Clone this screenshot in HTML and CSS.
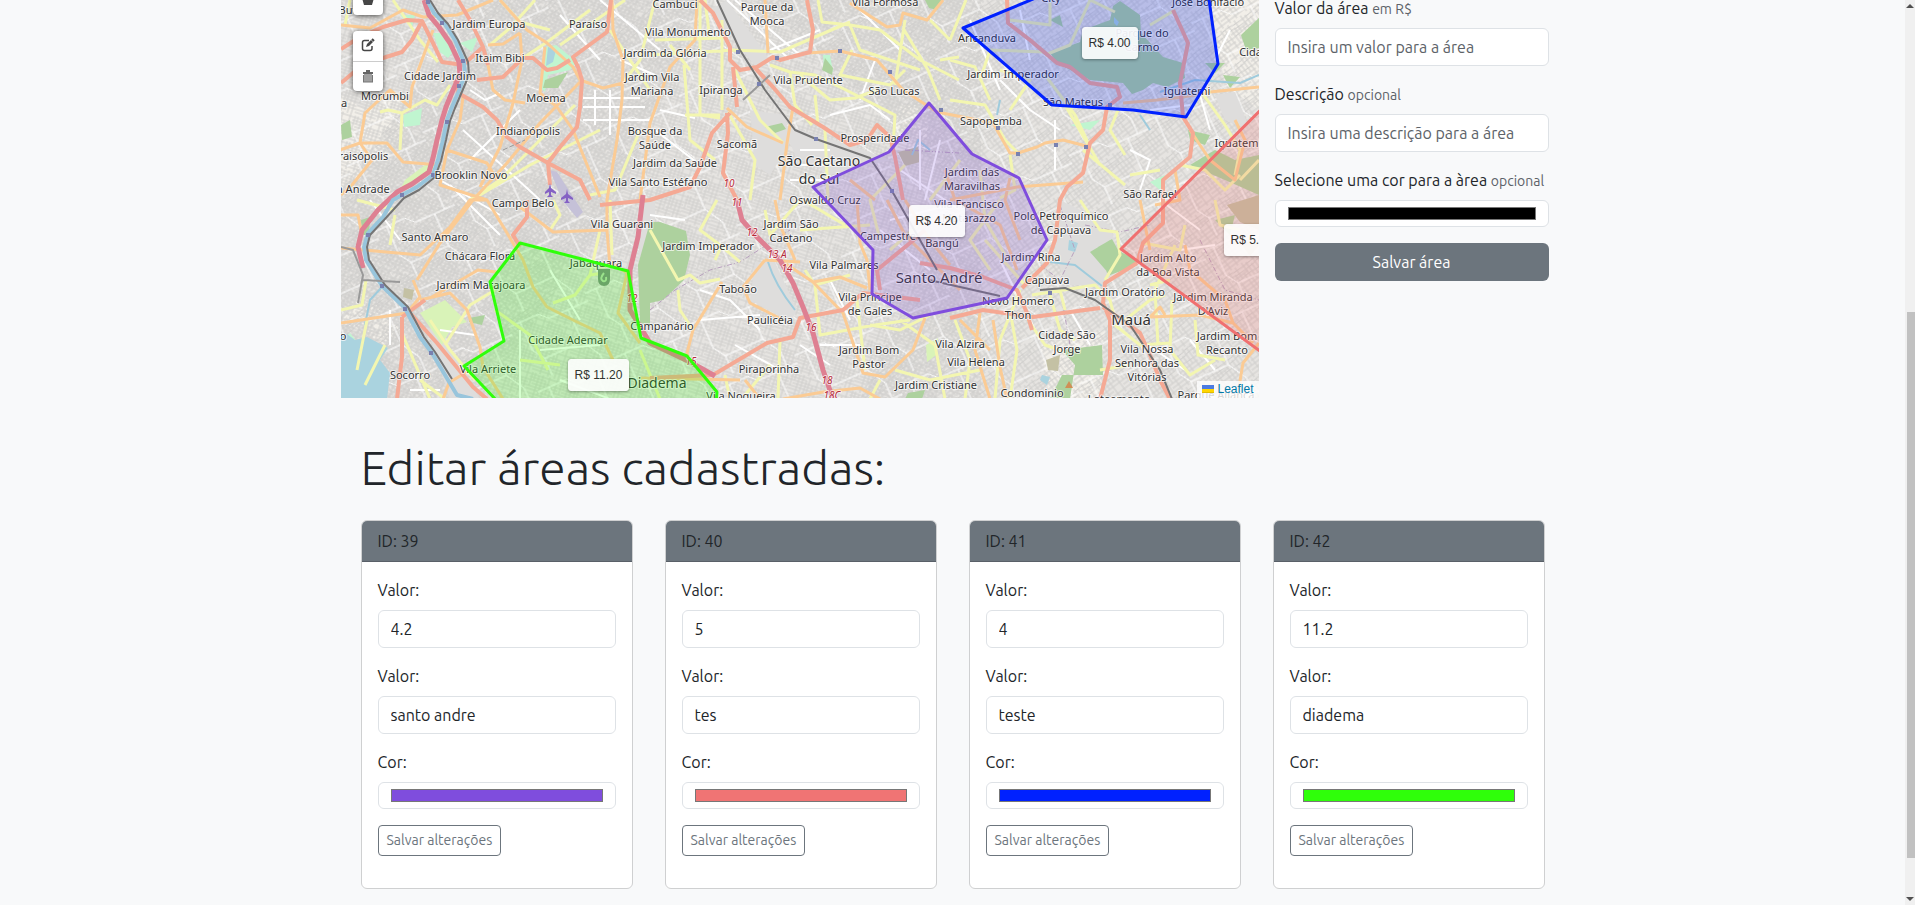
FILE: index.html
```html
<!DOCTYPE html>
<html lang="pt-BR">
<head>
<meta charset="utf-8">
<meta name="viewport" content="width=device-width, initial-scale=1">
<title>Áreas cadastradas</title>
<link rel="stylesheet" href="styles.css">
</head>
<body>
<main class="page">
  <div class="wrapper">
    <section class="editor">
      <div class="map">
        <svg class="map-canvas" viewBox="341 0 918 398" preserveAspectRatio="xMidYMin slice" role="img" aria-label="Mapa">
          <defs>
            <pattern id="streets" width="31" height="27" patternUnits="userSpaceOnUse" patternTransform="rotate(18)">
              <path class="lane" d="M0 2H31M0 5H17M0 8H31M4 11H31M0 14H31M0 17H12M15 18H31M0 21H31M0 24H22M2 0V14M5 0V8M9 2V27M13 0V21M17 5V27M20 0V18M24 8V27M28 0V27"/>
            </pattern>
            <pattern id="streets-b" width="37" height="33" patternUnits="userSpaceOnUse" patternTransform="rotate(-37)">
              <path class="lane" d="M0 2Q18 6 37 2M0 6Q18 10 37 6M0 10H20M0 14Q18 11 37 14M5 18H37M0 22H37M0 26H25M0 30H37M3 0V22M7 6V33M11 0V14M15 10V33M19 0V30M23 2V22M27 6V33M31 0V18M35 2V33"/>
            </pattern>
            <pattern id="avenues" width="83" height="71" patternUnits="userSpaceOnUse" patternTransform="rotate(-24)">
              <path class="avenue" d="M0 9H32L40 17H83M12 9V40L20 52V71M20 52H61V17M61 52L72 71M72 0V17"/>
            </pattern>
          </defs>

          <rect class="ground" x="341" width="918" height="399"/>
          <g class="built">
            <path d="M341 95L365 110 400 95 400 140 360 175 341 190ZM1210 0H1259V110L1225 85ZM900 105L930 105 925 150 890 150ZM363 290L400 330 385 345 341 322ZM1040 345L1105 330 1100 399H1050Z"/>
          </g>
          <rect x="341" width="640" height="399" fill="url(#streets)"/>
          <path d="M480 0H700L620 200 480 399H341V190ZM760 0H1259V399H860L960 190Z" fill="url(#streets-b)"/>
          <rect x="341" width="918" height="399" fill="url(#avenues)"/>
          <g class="industry">
            <path d="M755 262L775 262 797 310 790 322 750 300ZM750 110L785 115 790 143 770 175 755 165ZM1060 200L1110 225 1120 262 1100 285 1065 285 1055 250ZM783 125L850 145 890 160 830 175 795 155ZM710 10L727 0 770 60 755 66ZM642 200H655V225L638 262ZM427 328L440 330 480 399H450ZM1215 95L1235 92 1250 130 1225 120Z"/>
          </g>

          <g class="park">
            <path d="M545 47L556 45 577 62 570 70 548 75 545 92 541 88ZM403 115L422 108 420 125 404 127ZM460 43L478 37 472 52ZM650 266L665 262 676 270 665 279 655 276ZM823 55L830 55 833 72 824 68ZM1150 182L1165 175 1160 190ZM400 15L415 15 412 27ZM1070 125L1100 120 1090 130ZM341 340L350 333 358 343 345 350ZM433 33L440 33 453 52 448 58 440 52Z"/>
          </g>
          <g class="meadow">
            <path d="M420 313L445 300 467 322 452 327 442 345ZM405 180L425 165 440 167 400 190ZM926 345L938 338 936 355 927 362Z"/>
          </g>
          <g class="wood">
            <path d="M638 265L650 222 660 222 686 231 690 255 684 280 663 300 650 303 650 325 640 323ZM545 80L568 72 558 88 543 88ZM1113 6L1120 1 1140 15 1141 33 1163 57 1183 63 1185 78 1167 87 1153 83 1143 90 1132 94 1123 83 1090 80 1057 63 1050 53 1080 42 1083 30 1110 20ZM1090 252L1110 240 1117 250 1143 263 1110 275ZM1098 247L1112 239 1118 250 1137 262 1107 273ZM1062 350L1102 345 1103 375 1062 375 1050 399H1070L1075 365ZM925 0H943L937 10 929 8ZM765 127L782 123 786 129 775 133ZM825 58L833 68 832 75 822 70ZM1241 35L1259 18V48L1246 50ZM1205 63L1225 63 1215 73ZM1223 75L1240 77 1230 88ZM1188 130L1210 135 1205 145 1190 140ZM341 125L350 120 352 137 342 140ZM361 220L370 217 369 235 362 235ZM469 318L485 315 482 325 469 322ZM908 393L925 390 922 399H905ZM1190 165L1215 150 1235 160 1259 155V195L1225 180ZM1050 20L1060 15 1063 27ZM1215 220L1235 215 1230 235Z"/>
          </g>
          <g class="scrub">
            <path d="M898 152L918 147 920 162 905 166ZM404 288L414 290 412 300 403 297ZM1046 360L1060 355 1058 371 1048 370ZM1227 205L1259 195V230L1240 222ZM1238 240L1259 245 1250 256Z"/>
          </g>
          <g class="airport">
            <path d="M550 170L557 172 583 212 577 218 562 200Z"/>
          </g>
          <g class="water">
            <path d="M341 337L347 334 355 340 367 337 388 348 380 360 390 373 387 399H341ZM548 47L556 50 553 62 546 66ZM1114 17L1119 22 1117 26 1114 23ZM1069 240L1078 243 1075 252 1068 250ZM1042 375L1050 377 1047 385 1040 380Z"/>
          </g>
          <g class="stream">
            <path d="M365 325L370 300 382 287M768 262Q775 285 795 310M1050 262L1075 265 1102 286M1140 115L1150 130M997 115L1000 100M912 155L918 140 930 150M1160 92L1195 80 1240 83 1259 75"/>
          </g>
          <path class="border" d="M650 310L675 290 710 270 740 262 790 230M1060 205L1075 250 1060 280 1040 265M905 150L959 153M1085 225L1120 232 1150 225M1200 240L1225 290 1259 300M1062 300L1070 345"/>

          <g class="residential">
            <path d="M470 90L485 100 500 93M463 130L540 200M470 160L520 110M450 185L500 235M583 98H640M583 107H645M583 120H650M595 90V125M610 90V135M600 0L660 50M620 60L655 75M560 15L600 60M655 130L700 165M660 110L695 118M685 220L650 215M727 0L790 60M735 0L800 55M770 50L820 30M860 10L900 50M875 60L860 100M830 115L870 105 890 120M800 165H840M800 150H830M790 180H830M1000 80L1030 110 1060 130M1055 120V170M1150 110L1190 105M1200 95L1210 130M1130 150L1150 160 1140 190M700 290L730 300 760 330M735 345L780 370M700 320L760 315M800 345L830 365M820 345H860M830 280L850 320M1000 260L1040 340M1140 340L1185 370M1160 200L1200 230M370 200L400 240M440 180L500 215M390 310V345M440 330L475 335M520 330V399M540 350L600 345M550 270L580 320M1070 310L1090 345M900 170L960 210M880 230L930 270M920 130V190M940 140L925 200M890 220L950 205M1230 30L1215 60M1180 250L1215 245M1190 340L1215 370M410 390H440M560 380L610 399M970 20L1000 90M1020 10L1030 60"/>
          </g>

          <g class="secondary">
            <path d="M393 0L420 40 438 62M380 112L388 110 402 113 400 150M402 113L425 100 437 105 450 85M500 0L520 22 550 30M560 45L625 0M523 58L550 40 590 10M535 0L510 28 490 45M350 0L345 25M470 200L500 180 560 120 575 105M480 195L530 165 600 130M590 195L615 190 640 130M623 83L640 60 655 0M610 30L650 90M700 0V115L720 118M655 40L725 38M650 55L735 50M685 115H720M722 20V110M684 65L690 140 715 160M705 0L710 40M730 50L780 52 850 22M800 75L830 100 855 98 877 90M770 65L790 72 815 75 850 92 895 115 893 150M818 0L822 22 850 25 880 30 920 60 959 80M850 25L860 50 920 70M852 50L840 75 890 85 905 70M815 95L818 125M905 20L895 85M903 28L928 70 940 100M940 60L959 57M930 20L950 40M728 112L755 160 750 200M783 143L760 120 735 70M790 72L795 105 812 125M825 130L828 200M670 45L690 70M950 60L975 67 990 100M950 100L985 105 1005 140 1018 153M966 0L950 40M1000 70L1030 80 1010 110M1045 75L1075 115 1090 147M1065 105L1100 165M1118 110L1110 130 1125 155M1083 150L1125 185M1200 90L1225 125 1240 150 1235 175M1130 175L1160 170M1010 155L1015 190 1000 198M980 80L990 50 1045 52M1090 0L1070 45 1045 55M1050 0V25L1010 20M357 200L395 210M357 370L367 320M341 310L362 305 366 280M390 245L395 215M402 333L430 399M430 320L450 350 475 380M445 345L470 305 495 290M495 310L530 335 548 370M553 303L575 295 590 275 600 230M590 275L610 272M553 200L560 215 550 230M610 200L612 255M650 230L678 280 690 275 700 283 720 279M717 200L700 230 720 245 740 262M678 290L680 310 693 330M715 260L722 245M765 210L770 235 800 200M800 230L870 225M803 200L845 225M815 285L820 335 875 325 910 320M805 270L815 285 850 275M857 300L865 370M780 340L778 399M725 375L730 399M745 395L770 365M900 320L935 345 945 399M870 325L900 330 930 315M955 320L970 360 965 399M895 370L930 380 980 370M880 380L870 399M1010 310L1017 350 1010 399M1050 295L1060 330 1075 340M1032 295L1095 285 1110 300 1115 320M1060 290L1065 310M1020 290L1000 340 995 399M1080 200L1100 230 1117 232 1120 255 1105 280M1115 325L1140 345 1170 343M1125 320L1150 300 1165 295M1175 245L1155 290 1158 345M1172 300L1170 350 1190 375 1215 360M1195 320L1198 355 1225 360M1143 243L1180 250 1185 225M1215 200L1220 225 1240 230M1180 165L1205 170 1225 190 1240 175M1100 370L1130 365M1028 320L1045 345 1065 352M1170 280L1150 285M890 250L930 215M905 165L870 200 880 240M960 160L930 200M980 170L985 220 1005 255M1000 200L970 240 990 270M1090 0L1115 12M1150 25L1175 10M1259 160L1240 180M985 240L1025 285M365 385L385 345M420 380L445 399M520 360L560 365M640 350L660 399"/>
          </g>

          <g class="primary">
            <path d="M341 25L370 28 403 10 423 17 457 15 493 0M340 150L360 143 365 113 390 90 410 107 412 87 433 30M360 143L387 143 403 162 440 165M360 143L372 160 352 185 341 195M500 0L527 30 547 43 573 67 580 80 603 88 623 83M612 0L613 30 623 60 622 100 617 140 607 200 607 230M545 47L540 93 557 107 573 130 600 197M520 33L522 60 513 103 500 147 480 187M488 45L503 44 520 33M580 82L540 123 507 163 473 200 440 243 417 280M463 97L460 120 447 150 487 163 497 180M488 65L493 90 505 100 525 103M341 248L420 255 450 227 470 200 487 200M413 280L420 297 407 313 341 323M420 300L450 293 467 310 480 347 483 367 503 399M430 298L478 270 497 272M447 150L440 185 487 200 507 233 523 260 533 287 547 307 573 320 600 333 613 360M600 267L615 265 627 273 618 313 640 343M520 207L553 232 607 230 610 267M697 0L695 40 670 67 650 123 640 200M765 0L768 53M807 53L840 51 877 60 903 90 937 112 993 123 1010 153 1018 153 1037 147 1045 143 1063 140 1090 147M727 108L747 127 783 143M793 107L787 143 780 200M850 3L887 27 900 25 903 13 927 20 943 0M950 200L1017 187 1083 182M765 260L743 287 750 303 783 320M765 260L800 262M722 282L693 330 687 353 690 362M780 260L813 282 843 313 853 343 863 373 885 377 913 350 925 318M813 282L840 277 867 288M857 200L860 243 867 260 870 290M640 378L740 380M745 380L760 399M783 399L823 392 860 388 880 399M993 320L1000 367 1007 399M980 313L975 350 990 399M960 320L990 350M1150 317L1200 315 1233 323 1253 343M1150 317L1160 307 1165 315M1259 343L1243 363 1237 399M1259 87L1210 92 1183 97 1157 100 1123 103M450 380L443 399M470 370L450 382M775 200L780 225 795 260M905 200L930 240 950 265M945 170L955 200 1000 225 1017 270M1010 178L1005 200 1020 240M887 200L905 235 935 265 960 290M850 180L875 200M1140 200L1150 250M1155 205L1180 200 1175 170M1190 130L1210 160 1235 180 1245 140 1235 120M1185 245L1190 270 1225 300 1233 323M341 215L358 215 362 235"/>
          </g>
          <g class="trunk">
            <path d="M341 49L360 37 383 27 407 20 422 21 433 43 442 62 463 65M422 21L412 40 402 52 383 58 360 67 341 83M458 0L470 20 483 47 488 65M455 80L458 93 483 107 497 120 507 137 520 147 548 163 580 180 590 200M548 163L560 147 577 127 580 107 582 80 578 67 573 57 607 32 611 0M548 163L550 185M527 200V217L513 235 520 247M477 80L503 77 523 58 533 58 547 70 557 68 570 60M463 65L483 47M700 0L713 13 723 33 730 47 730 60 740 70 757 67 773 57 780 60 810 52 813 30 807 0M755 68L773 87 790 107 823 127 850 145 867 140 877 125 890 137 895 157 903 200M733 67L737 107M730 113L712 133 700 167 690 187 650 200 600 205M727 113L728 133 723 173 737 200M1007 0L1008 23 1030 40 1057 63 1070 67 1090 83 1117 87 1120 97 1107 107 1103 130 1090 143 1083 173 1067 187 1060 200 1055 240 1047 263 1022 288M1173 10L1188 43 1180 83 1183 117 1193 133 1190 157 1163 180 1163 223 1143 243 1137 263 1105 283 1103 303 1110 320 1110 360 1100 399M950 318L983 310 1033 317 1100 308M920 263L950 268 983 277 1017 290 1027 313 1032 330M1103 307L1140 333 1150 355 1160 380 1170 399M650 378L713 375 767 343 793 337 800 318 843 310 863 293 920 300M402 317V357L397 399M402 317L425 300M410 313L437 343 473 387 487 399M880 290L877 270 910 243 925 230"/>
          </g>
          <g class="motorway">
            <path d="M643 195L638 237 630 270 630 310 650 343 690 362 715 376M737 200L742 220 757 237 780 260 793 283 803 307 813 333 823 370 833 399"/>
            <path d="M424 0L429 15 439 27 450 43 459 62 460 75 453 90 446 107 442 120 437 140 433 158 429 172 412 184 397 192 378 210 362 230 358 247 363 268"/>
          </g>
          <path class="river" d="M427 0L434 13 444 23 455 40 464 62 465 75 458 93 452 107 447 120 443 140 438 160 433 175 417 187 402 195 393 200 383 217 368 233 364 247 366 260 382 286 405 308 420 337 432 353 448 380 457 395 473 399"/>
          <path class="rail" d="M430 0L438 13 448 24 458 40 468 62 469 75 461 94 455 108 450 121 446 140 441 161 435 177 419 190 404 198 384 220 370 235 367 247 369 260 385 285 408 307 424 337 435 352 452 379M717 0L740 50 765 90 795 130 816 139 870 158 892 191 920 240 937 270M929 280L1000 296M1040 290L1065 288 1095 300 1130 325 1160 370 1172 399"/>
          <path class="rail-light" d="M743 100L770 75M341 247L353 250 363 275 358 303M363 280L400 282"/>
          <path class="subway-line" d="M503 150L525 140"/>
          <g class="station">
            <path d="M426 0h4v4h-4zM440 21h4v4h-4zM461 59h4v4h-4zM457 84h4v4h-4zM445 120h4v4h-4zM431 173h4v4h-4zM400 193h4v4h-4zM366 233h4v4h-4zM380 284h4v4h-4zM403 307h4v4h-4zM429 351h4v4h-4zM736 50h4v4h-4zM757 82h4v4h-4zM775 56h4v4h-4zM838 49h4v4h-4zM888 70h4v4h-4zM939 108h4v4h-4zM814 137h4v4h-4zM890 189h4v4h-4zM996 126h4v4h-4zM1016 152h4v4h-4zM1054 143h4v4h-4zM1084 145h4v4h-4zM1108 103h4v4h-4zM1048 291h4v4h-4z"/>
          </g>
          <g class="plane">
            <path d="M550 183L551 188 556 192V194L551 192V195L553 197H547L549 195V192L545 194V192L549 188Z"/>
            <path d="M567 189L568 194 573 198V200L568 198V201L570 203H564L566 201V198L561 200V198L566 194Z"/>
          </g>
          <path class="peak" d="M1069 381L1073 388H1065Z"/>

          <g class="place">
            <text x="359" y="14">Butantã</text><text x="489" y="28">Jardim Europa</text><text x="588" y="28">Paraíso</text>
            <text x="500" y="62">Itaim Bibi</text><text x="440" y="80">Cidade Jardim</text><text x="385" y="100">Morumbi</text>
            <text x="344" y="107">a</text><text x="546" y="102">Moema</text><text x="528" y="135">Indianópolis</text>
            <text x="357" y="160">Paraisópolis</text><text x="471" y="179">Brooklin Novo</text><text x="357" y="193">Vila Andrade</text>
            <text x="523" y="207">Campo Belo</text><text x="665" y="57">Jardim da Glória</text>
            <text x="652" y="81">Jardim Vila<tspan x="652" dy="14">Mariana</tspan></text>
            <text x="655" y="135">Bosque da<tspan x="655" dy="14">Saúde</tspan></text>
            <text x="675" y="167">Jardim da Saúde</text><text x="658" y="186">Vila Santo Estéfano</text><text x="688" y="36">Vila Monumento</text>
            <text x="675" y="8">Cambuci</text><text x="767" y="11">Parque da<tspan x="767" dy="14">Mooca</tspan></text>
            <text x="885" y="6">Vila Formosa</text><text x="808" y="84">Vila Prudente</text><text x="721" y="94">Ipiranga</text>
            <text x="894" y="95">São Lucas</text><text x="875" y="142">Prosperidade</text><text x="737" y="148">Sacomã</text>
            <text x="825" y="204">Oswaldo Cruz</text><text x="987" y="42">Aricanduva</text><text x="1051" y="2">City</text>
            <text x="1208" y="6">José Bonifácio</text><text x="1142" y="37">Parque do<tspan x="1142" dy="14">Carmo</tspan></text>
            <text x="1013" y="78">Jardim Imperador</text><text x="1073" y="106">São Mateus</text><text x="1187" y="95">Iguatemi</text>
            <text x="991" y="125">Sapopemba</text><text x="1238" y="147">Iguatemi</text><text x="1257" y="56">Cidade</text>
            <text x="972" y="176">Jardim das<tspan x="972" dy="14">Maravilhas</tspan></text><text x="1150" y="198">São Rafael</text>
            <text x="435" y="241">Santo Amaro</text><text x="480" y="260">Chácara Flora</text><text x="481" y="289">Jardim Marajoara</text>
            <text x="596" y="267">Jabaquara</text><text x="622" y="228">Vila Guarani</text><text x="568" y="344">Cidade Ademar</text>
            <text x="488" y="373">Vila Arriete</text><text x="410" y="379">Socorro</text><text x="343" y="340">o</text>
            <text x="662" y="330">Campanário</text><text x="791" y="228">Jardim São<tspan x="791" dy="14">Caetano</tspan></text>
            <text x="708" y="250">Jardim Imperador</text><text x="844" y="269">Vila Palmares</text><text x="738" y="293">Taboão</text>
            <text x="770" y="324">Paulicéia</text><text x="870" y="301">Vila Príncipe<tspan x="870" dy="14">de Gales</tspan></text>
            <text x="869" y="354">Jardim Bom<tspan x="869" dy="14">Pastor</tspan></text><text x="769" y="373">Piraporinha</text>
            <text x="741" y="400">Vila Nogueira</text><text x="888" y="240">Campestre</text>
            <text x="969" y="208">Vila Francisco<tspan x="969" dy="14">Matarazzo</tspan></text><text x="942" y="247">Bangú</text>
            <text x="960" y="348">Vila Alzira</text><text x="976" y="366">Vila Helena</text><text x="936" y="389">Jardim Cristiane</text>
            <text x="1061" y="220">Polo Petroquímico<tspan x="1061" dy="14">de Capuava</tspan></text><text x="1031" y="261">Jardim Rina</text>
            <text x="1047" y="284">Capuava</text><text x="1018" y="305">Novo Homero<tspan x="1018" dy="14">Thon</tspan></text>
            <text x="1125" y="296">Jardim Oratório</text><text x="1067" y="339">Cidade São<tspan x="1067" dy="14">Jorge</tspan></text>
            <text x="1147" y="353">Vila Nossa<tspan x="1147" dy="14">Senhora das</tspan><tspan x="1147" dy="14">Vitórias</tspan></text>
            <text x="1168" y="262">Jardim Alto<tspan x="1168" dy="14">da Boa Vista</tspan></text>
            <text x="1213" y="301">Jardim Miranda<tspan x="1213" dy="14">D'Aviz</tspan></text>
            <text x="1227" y="340">Jardim Bom<tspan x="1227" dy="14">Recanto</tspan></text>
            <text x="1032" y="397">Condominio</text><text x="1119" y="403">Loteamento</text><text x="1216" y="399">Parque Aliança</text>
          </g>
          <g class="place town">
            <text x="819" y="166">São Caetano<tspan x="819" dy="18">do Sul</tspan></text>
            <text x="657" y="388">Diadema</text>
          </g>
          <g class="place city">
            <text x="939" y="283">Santo André</text><text x="1131" y="325">Mauá</text>
          </g>
          <g class="place exit">
            <text x="729" y="187">10</text><text x="737" y="206">11</text><text x="752" y="236">12</text><text x="777" y="258">13 A</text>
            <text x="787" y="272">14</text><text x="811" y="331">16</text><text x="827" y="384">18</text><text x="832" y="399">18C</text>
            <text x="632" y="302">12</text><text x="691" y="365">15</text>
          </g>

          <path class="area" stroke="#7f4ddd" fill="#7f4ddd" d="M929 103L889 152 813 187 873 250 872 294 913 318 1007 298 1047 240 1019 178 972 154Z"/>
          <path class="area" stroke="#f07070" fill="#f07070" d="M1121 249L1340 31V410Z"/>
          <path class="area" stroke="#0021ff" fill="#0021ff" d="M963 28L1067 -15H1207L1218 64 1186 117 1133 110 1052 105Z"/>
          <path class="area" stroke="#2fff0a" fill="#2fff0a" d="M520 243L628 271 641 338 687 356 717 392 715 420H515L464 366 504 341 490 282Z"/>
          <path class="poi" d="M598 269h12v10q0 7-6 7t-6-7z"/>
          <path class="poi-mark" d="M604 273q-5 6-1 8 4 1 3-4"/>
        </svg>

        <span class="tip tip-blue">R$ 4.00</span>
        <span class="tip tip-purple">R$ 4.20</span>
        <span class="tip tip-red">R$ 5.00</span>
        <span class="tip tip-green">R$ 11.20</span>

        <div class="controls">
          <div class="control-group">
            <button class="control" type="button" aria-label="Desenhar área">
              <svg width="14" height="14" viewBox="0 0 14 14"><path d="M7 1L13 6 11 13H3L1 6Z" fill="#464646"/></svg>
            </button>
          </div>
          <div class="control-group">
            <button class="control" type="button" aria-label="Editar áreas">
              <svg width="14" height="14" viewBox="0 0 14 14" fill="none" stroke="#464646"><path d="M8 2.500H3.500Q1.500 2.500 1.500 4.500V10.500Q1.500 12.500 3.500 12.500H9Q11 12.500 11 10.500V8" stroke-width="1.500"/><path d="M5 9L6 6 10 2 12 4 8 8Z" fill="#464646" stroke="none"/><path d="M11 1L13 3" stroke-width="2"/></svg>
            </button>
            <button class="control" type="button" aria-label="Excluir áreas">
              <svg width="14" height="14" viewBox="0 0 14 14"><path d="M5 1H9V3H12V5H2V3H5Z" fill="#666"/><path d="M3 5H11V13H3Z" fill="#a0a0a0"/><path d="M2 13H12M2.500 6V13M11.500 6V13" stroke="#777"/></svg>
            </button>
          </div>
        </div>

        <div class="attribution">
          <a href="#leaflet"><svg width="12" height="8" viewBox="0 0 12 8" aria-hidden="true"><path fill="#4c7be1" d="M0 0h12v4H0z"/><path fill="#ffd500" d="M0 4h12v3H0z"/><path fill="#e0bc00" d="M0 7h12v1H0z"/></svg>
          Leaflet</a>
        </div>
      </div>

      <form class="new-area">
        <div class="field">
          <label for="new-value">Valor da área <small>em R$</small></label>
          <input class="input" id="new-value" type="text" placeholder="Insira um valor para a área">
        </div>
        <div class="field">
          <label for="new-desc">Descrição <small>opcional</small></label>
          <input class="input" id="new-desc" type="text" placeholder="Insira uma descrição para a área">
        </div>
        <div class="field">
          <label for="new-color">Selecione uma cor para a àrea <small>opcional</small></label>
          <input class="input color" id="new-color" type="color" value="#000000">
        </div>
        <button class="save" type="button">Salvar área</button>
      </form>
    </section>

    <section class="saved">
      <h1>Editar áreas cadastradas:</h1>
      <div class="cards">
        <form class="card">
          <div class="card-head">ID: 39</div>
          <div class="card-body">
            <div class="field"><label for="v39">Valor:</label><input class="input" id="v39" type="text" value="4.2"></div>
            <div class="field"><label for="d39">Valor:</label><input class="input" id="d39" type="text" value="santo andre"></div>
            <div class="field"><label for="c39">Cor:</label><input class="input color" id="c39" type="color" value="#7f4ddd"></div>
            <button class="update" type="button">Salvar alterações</button>
          </div>
        </form>
        <form class="card">
          <div class="card-head">ID: 40</div>
          <div class="card-body">
            <div class="field"><label for="v40">Valor:</label><input class="input" id="v40" type="text" value="5"></div>
            <div class="field"><label for="d40">Valor:</label><input class="input" id="d40" type="text" value="tes"></div>
            <div class="field"><label for="c40">Cor:</label><input class="input color" id="c40" type="color" value="#f07474"></div>
            <button class="update" type="button">Salvar alterações</button>
          </div>
        </form>
        <form class="card">
          <div class="card-head">ID: 41</div>
          <div class="card-body">
            <div class="field"><label for="v41">Valor:</label><input class="input" id="v41" type="text" value="4"></div>
            <div class="field"><label for="d41">Valor:</label><input class="input" id="d41" type="text" value="teste"></div>
            <div class="field"><label for="c41">Cor:</label><input class="input color" id="c41" type="color" value="#0021ff"></div>
            <button class="update" type="button">Salvar alterações</button>
          </div>
        </form>
        <form class="card">
          <div class="card-head">ID: 42</div>
          <div class="card-body">
            <div class="field"><label for="v42">Valor:</label><input class="input" id="v42" type="text" value="11.2"></div>
            <div class="field"><label for="d42">Valor:</label><input class="input" id="d42" type="text" value="diadema"></div>
            <div class="field"><label for="c42">Cor:</label><input class="input color" id="c42" type="color" value="#2fff0a"></div>
            <button class="update" type="button">Salvar alterações</button>
          </div>
        </form>
      </div>
    </section>
  </div>
</main>
<div class="scrollbar" aria-hidden="true">
  <svg class="arrow" viewBox="0 0 8 4"><path d="M4 0L8 4H0Z"/></svg>
  <div class="track"><div class="thumb"></div></div>
  <svg class="arrow" viewBox="0 0 8 4"><path d="M0 0H8L4 4Z"/></svg>
</div>
</body>
</html>
```

FILE: styles.css
```css
*,
*::before,
*::after {
  box-sizing: border-box;
}

body {
  display: flex;
  min-height: 100vh;
  margin: 0;
  overflow: hidden;
  background: #f8f9fa;
  color: #212529;
  font: 16px/24px Ubuntu, Roboto, "Open Sans", sans-serif;
}

.page {
  flex: 1;
  min-width: 0;
}

.wrapper {
  max-width: 1224px;
  margin: 0 auto;
  padding-bottom: 16px;
}

.editor {
  display: grid;
  grid-template-columns: 3fr 1fr;
}

/* Map */

.map {
  position: relative;
  height: 398px;
  overflow: hidden;
  font: 12px/18px "Liberation Sans", Arial, sans-serif;
}

.map-canvas {
  display: block;
  width: 100%;
  height: 100%;
}

.map-canvas path {
  stroke-linejoin: round;
}

.ground { fill: #e6e4e1; }
.built { fill: #f2efe9; }
.industry { fill: #dedddc; }
.park { fill: #c0f5d0; }
.meadow { fill: #d9f3b8; }
.wood { fill: #add19e; }
.scrub { fill: #c4c1a4; }
.airport { fill: #c5c1d8; }
.water { fill: #aad3df; }
.peak { fill: #d08f55; }
.plane { fill: #8461c4; }
.station { fill: #7981b0; }
.poi { fill: #6aa567; }

.lane,
.avenue,
.stream path,
.border,
.residential path,
.secondary path,
.primary path,
.trunk path,
.motorway path,
.river,
.rail,
.rail-light,
.subway-line,
.poi-mark {
  fill: none;
}

.poi-mark { stroke: #9be38c; stroke-width: 2; }
.lane { stroke: #cfcecc; }
.avenue { stroke: #fff; }
.stream path { stroke: #9fcbdc; stroke-width: 2; }
.border { stroke: #b79fbd; stroke-dasharray: 5 2 1 2; }
.residential path { stroke: #fff; stroke-width: 2; }
.secondary path { stroke: #f3f6b0; stroke-width: 3; }
.primary path { stroke: #fbcb94; stroke-width: 3; }
.trunk path { stroke: #f5a994; stroke-width: 4; }
.motorway path { stroke: #de8092; stroke-width: 5; }
.river { stroke: #98c5dc; stroke-width: 4; }
.rail { stroke: #747474; stroke-width: 2; }
.rail-light { stroke: #999; stroke-width: 2; }
.subway-line { stroke: #999; stroke-dasharray: 5 2; }

.place {
  fill: #333;
  stroke: rgba(255, 255, 255, 0.7);
  stroke-width: 2px;
  stroke-linejoin: round;
  paint-order: stroke;
  font: 11px "Noto Sans", sans-serif;
  text-anchor: middle;
}

.town {
  font-size: 14px;
}

.city {
  font-size: 15px;
}

.exit {
  fill: #b5293a;
  font-size: 10px;
  font-style: italic;
}

.area {
  fill-opacity: 0.2;
  stroke-width: 3px;
}

.tip {
  position: absolute;
  padding: 6px;
  border: 1px solid #fff;
  border-radius: 3px;
  background: #fff;
  box-shadow: 0 1px 3px rgba(0, 0, 0, 0.4);
  color: #222;
  opacity: 0.9;
  white-space: nowrap;
}

.tip-blue { top: 27px; left: 741px; }
.tip-purple { top: 205px; left: 568px; }
.tip-red { top: 224px; left: 883px; }
.tip-green { top: 359px; left: 227px; }

.controls {
  position: absolute;
  top: -15px;
  left: 12px;
  display: grid;
  gap: 16px;
}

.control-group {
  border-radius: 4px;
  background: #fff;
  box-shadow: 0 1px 5px rgba(0, 0, 0, 0.65);
}

.control {
  display: grid;
  place-items: center;
  width: 30px;
  height: 30px;
  padding: 0 0 2px;
  border: 0;
  background: none;
}

.control + .control {
  border-top: 1px solid #ccc;
}

.attribution {
  position: absolute;
  right: 0;
  bottom: 0;
  padding: 0 5px;
  background: rgba(255, 255, 255, 0.8);
  line-height: 17px;
}

.attribution a {
  color: #0078a8;
  text-decoration: none;
}

/* Forms */

.new-area {
  margin-top: -4px;
  padding: 0 16px;
}

.field {
  margin-bottom: 16px;
}

.field label {
  display: block;
  margin-bottom: 8px;
  white-space: nowrap;
}

.field small {
  color: #5c6268;
  font-size: 14px;
  line-height: 16px;
}

.input {
  display: block;
  width: 100%;
  height: 38px;
  padding: 6px 12px;
  border: 1px solid #dee2e6;
  border-radius: 6px;
  background: #fff;
  color: inherit;
  font: inherit;
}

.input::placeholder {
  color: #5c6268;
  opacity: 1;
}

.color {
  height: 27px;
}

.color::-webkit-color-swatch-wrapper {
  padding: 0;
}

.color::-webkit-color-swatch {
  border: 1px solid #777;
  border-radius: 0;
}

.save {
  width: 100%;
  padding: 7px 12px;
  border: 0;
  border-radius: 6px;
  background: #6c757d;
  color: #fff;
  font: inherit;
}

/* Saved areas */

.saved {
  padding: 40px 20px 0;
}

.saved h1 {
  margin: 0 0 24px;
  font-size: 48px;
  font-weight: 300;
  line-height: 58px;
}

.cards {
  display: grid;
  grid-template-columns: repeat(4, 1fr);
  gap: 32px;
}

.card {
  overflow: hidden;
  border: 1px solid #cfd0d1;
  border-radius: 6px;
  background: #fff;
}

.card-head {
  padding: 8px 16px;
  border-bottom: 1px solid #596068;
  background: #6c757d;
}

.card-body {
  padding: 16px 16px 32px;
}

.update {
  display: block;
  padding: 4px 8px;
  border: 1px solid #6c757d;
  border-radius: 4px;
  background: none;
  color: #6c757d;
  font: inherit;
  font-size: 14px;
  line-height: 21px;
}

/* Scrollbar */

.scrollbar {
  display: flex;
  flex-direction: column;
  align-items: center;
  width: 10px;
  padding: 4px 0;
  background: #f0f0f0;
}

.arrow {
  width: 8px;
  height: 4px;
  fill: #505050;
}

.track {
  display: grid;
  flex: 1;
  grid-template-rows: 304fr 546fr 39fr;
  width: 100%;
  padding-left: 2px;
}

.thumb {
  grid-row: 2;
  background: #c1c1c1;
}
```
